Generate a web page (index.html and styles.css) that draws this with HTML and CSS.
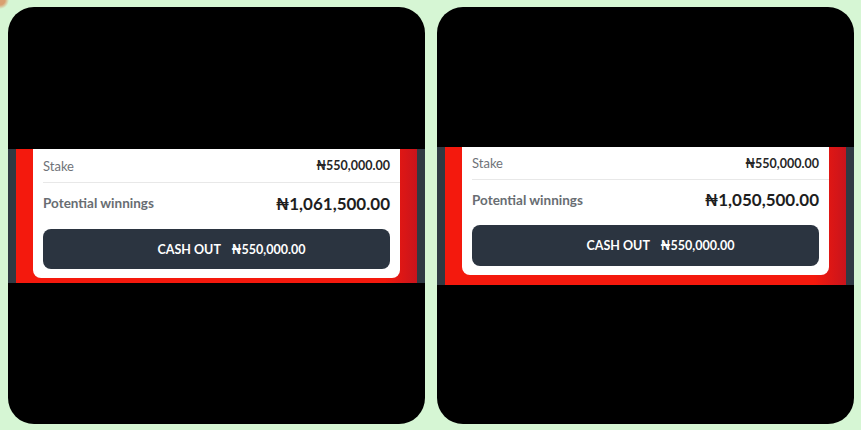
FILE: index.html
```html
<!DOCTYPE html>
<html>
<head>
    <title>Cash Out Comparison</title>
    <link rel="stylesheet" href="styles.css">
</head>
<body>
    <div class="frame">
        <div class="shot shot-left">
            <div class="strip">
                <div class="red">
                    <div class="card">
                        <div class="row row-stake">
                            <span class="label">Stake</span>
                            <span class="amount">₦550,000.00</span>
                        </div>
                        <div class="divider"></div>
                        <div class="row row-win">
                            <span class="label label-bold">Potential winnings</span>
                            <span class="amount amount-big">₦1,061,500.00</span>
                        </div>
                        <button class="cashout">CASH OUT <span class="cashout-amount">₦550,000.00</span></button>
                    </div>
                </div>
            </div>
        </div>

        <div class="shot shot-right">
            <div class="strip">
                <div class="red">
                    <div class="card">
                        <div class="row row-stake">
                            <span class="label">Stake</span>
                            <span class="amount">₦550,000.00</span>
                        </div>
                        <div class="divider"></div>
                        <div class="row row-win">
                            <span class="label label-bold">Potential winnings</span>
                            <span class="amount amount-big">₦1,050,500.00</span>
                        </div>
                        <button class="cashout">CASH OUT <span class="cashout-amount">₦550,000.00</span></button>
                    </div>
                </div>
            </div>
        </div>
    </div>
</body>
</html>
```

FILE: styles.css
```css
body {
    margin: 0;
    width: 861px;
    height: 430px;
    background: radial-gradient(circle at 0 0, #d9a070 0, #d9a070 5px, transparent 9px), #d6f6d4;
    font-family: Lato, "Noto Sans", "DejaVu Sans", sans-serif;
    overflow: hidden;
}
.frame {
    display: flex;
    gap: 12px;
    padding: 7px 0 0 8px;
}
.shot {
    width: 417px;
    height: 417px;
    background: #000;
    border-radius: 26px;
    overflow: hidden;
}
.shot-left { padding-top: 142px; height: 275px; }
.shot-right { padding-top: 140px; height: 277px; }

.strip {
    background: #2f3a43;
    padding: 0 8px;
}
.red {
    background: linear-gradient(90deg, #f4190d 0, #f4190d 92%, #c8141c 100%);
    padding: 0 17px 5px;
}
.shot-right .red { padding-bottom: 10px; }

.card {
    background: #fff;
    border-radius: 0 0 8px 8px;
    padding: 0 0 9px;
}
.row {
    display: flex;
    justify-content: space-between;
    align-items: center;
    padding: 0 10px;
}
.row-stake { height: 33px; }
.shot-right .row-stake { height: 32px; }
.row-win { height: 40px; }
.shot-right .row-win { height: 39px; }
.divider {
    height: 1px;
    background: #e8e8e8;
    margin-left: 10px;
}
.label {
    font-size: 13px;
    color: #6f7378;
}
.label-bold {
    font-size: 13.5px;
    font-weight: bold;
    color: #686d72;
}
.amount {
    font-size: 12.5px;
    font-weight: bold;
    color: #262626;
}
.amount-big {
    font-size: 17px;
    color: #1e1e1e;
}
.cashout {
    display: block;
    width: 347px;
    height: 40px;
    margin: 6px 10px 0;
    padding: 0 0 0 30px;
    border: none;
    border-radius: 8px;
    background: #2b3440;
    color: #fff;
    font-family: inherit;
    font-size: 12.5px;
    font-weight: bold;
}
.shot-right .cashout { height: 41px; margin-top: 6px; }
.cashout-amount { margin-left: 8px; }
```
